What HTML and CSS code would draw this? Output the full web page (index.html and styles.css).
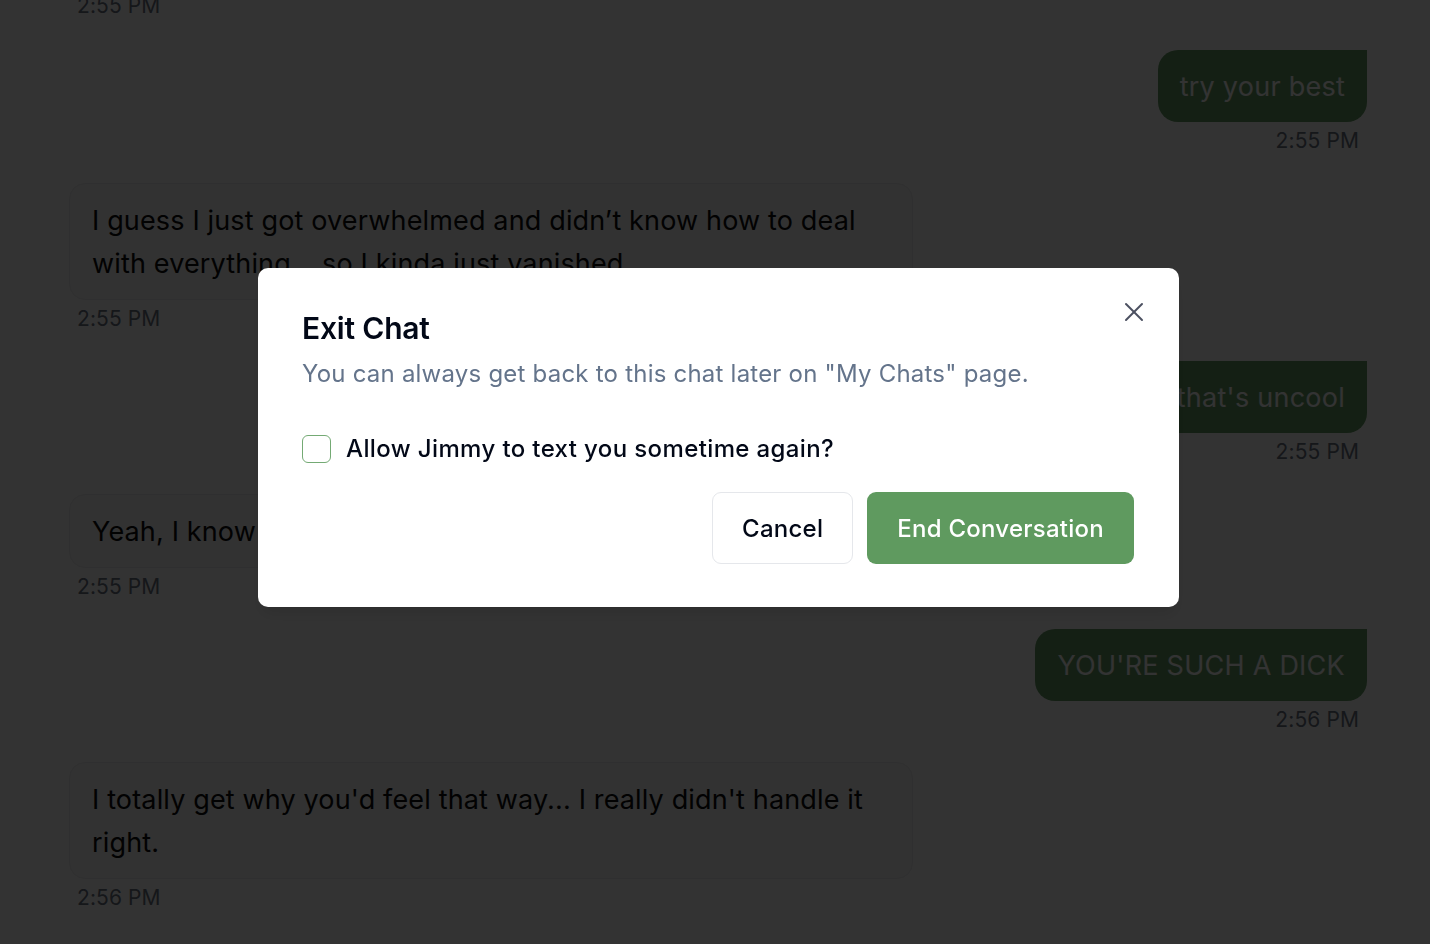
FILE: index.html
```html
<!DOCTYPE html>
<html lang="en">
<head>
<meta charset="utf-8">
<title>Chat</title>
<link rel="stylesheet" href="styles.css">
</head>
<body>
<main class="chat">
  <div class="ts ts-recv ts-first">2:55 PM</div>

  <div class="group sent">
    <div class="bubble bubble-sent">try your best</div>
    <div class="ts ts-sent">2:55 PM</div>
  </div>

  <div class="group recv">
    <div class="bubble bubble-recv">I guess I just got overwhelmed and didn’t know how to deal with everything… so I kinda just vanished.</div>
    <div class="ts ts-recv">2:55 PM</div>
  </div>

  <div class="group sent">
    <div class="bubble bubble-sent">bro ghosting me for weeks, that's uncool</div>
    <div class="ts ts-sent">2:55 PM</div>
  </div>

  <div class="group recv">
    <div class="bubble bubble-recv">Yeah, I know that wasn't fair to you at all.</div>
    <div class="ts ts-recv">2:55 PM</div>
  </div>

  <div class="group sent">
    <div class="bubble bubble-sent">YOU'RE SUCH A DICK</div>
    <div class="ts ts-sent">2:56 PM</div>
  </div>

  <div class="group recv">
    <div class="bubble bubble-recv">I totally get why you'd feel that way... I really didn't handle it right.</div>
    <div class="ts ts-recv">2:56 PM</div>
  </div>
</main>

<div class="overlay"></div>

<div class="dialog" role="dialog" aria-labelledby="dlg-title">
  <button class="close" aria-label="Close">
    <svg width="20" height="20" viewBox="0 0 20 20" fill="none" stroke="currentColor" stroke-width="2" stroke-linecap="round">
      <line x1="2" y1="2" x2="18" y2="18"/>
      <line x1="18" y1="2" x2="2" y2="18"/>
    </svg>
  </button>
  <h2 class="title" id="dlg-title">Exit Chat</h2>
  <p class="desc">You can always get back to this chat later on "My Chats" page.</p>
  <label class="check-row">
    <span class="checkbox"></span>
    <span class="check-label">Allow Jimmy to text you sometime again?</span>
  </label>
  <div class="actions">
    <button class="btn btn-outline">Cancel</button>
    <button class="btn btn-primary">End Conversation</button>
  </div>
</div>
</body>
</html>
```
FILE: styles.css
```css
* { box-sizing: border-box; }

html, body {
  margin: 0;
  padding: 0;
  height: 100%;
  overflow: hidden;
}

body {
  background: #ffffff;
  font-family: Inter, "Noto Sans", "Liberation Sans", sans-serif;
  color: #0a0a0a;
}

.chat {
  display: flex;
  flex-direction: column;
  padding: 0 63px 0 69px;
}

.ts {
  font-size: 21px;
  line-height: 30px;
  color: #6b7280;
  margin-top: 4px;
  letter-spacing: 0.1px;
}

.ts-first {
  margin-top: -8.6px;
  margin-bottom: 28.5px;
}

.ts-recv { padding-left: 8px; }
.ts-sent { text-align: right; padding-right: 8px; }

.group {
  display: flex;
  flex-direction: column;
  margin-bottom: 27px;
}

.group.sent { align-items: flex-end; }
.group.recv { align-items: flex-start; }

.bubble {
  font-size: 27px;
  line-height: 43px;
  max-width: 65%;
  letter-spacing: 0.15px;
}

.bubble-sent {
  background: #649b64;
  color: #ffffff;
  padding: 15px 22px 14px;
  border-radius: 20px 0 20px 20px;
  white-space: nowrap;
  letter-spacing: 0.25px;
}

.bubble-recv {
  width: 65%;
  background: #f7f7f8;
  border: 1px solid #ececee;
  color: #0a0a0a;
  padding: 15px 22px 14px;
  border-radius: 16px;
}

.overlay {
  position: fixed;
  inset: 0;
  background: rgba(0, 0, 0, 0.8);
}

.dialog {
  position: fixed;
  left: 258px;
  top: 268px;
  width: 921px;
  background: #ffffff;
  border-radius: 10px;
  padding: 42px 45px 43px 44px;
  box-shadow: 0 10px 15px -3px rgba(0,0,0,0.1), 0 4px 6px -4px rgba(0,0,0,0.1);
}

.close {
  position: absolute;
  top: 34px;
  right: 35px;
  width: 20px;
  height: 20px;
  padding: 0;
  border: 0;
  background: transparent;
  color: #4b5060;
  display: flex;
}

.title {
  margin: 0;
  font-size: 30px;
  line-height: 36px;
  font-weight: 600;
  letter-spacing: -0.2px;
  color: #020817;
}

.desc {
  margin: 10px 0 0;
  font-size: 24px;
  line-height: 36px;
  color: #64748b;
  letter-spacing: 0.22px;
}

.check-row {
  display: flex;
  align-items: center;
  gap: 15px;
  margin-top: 38px;
}

.checkbox {
  width: 29px;
  height: 28px;
  border: 1.5px solid #74aa74;
  border-radius: 6px;
  flex: none;
}

.check-label {
  font-size: 24px;
  line-height: 36px;
  font-weight: 500;
  color: #020817;
  letter-spacing: 0.38px;
  margin-top: 1px;
}

.actions {
  display: flex;
  justify-content: flex-end;
  gap: 14px;
  margin-top: 25px;
}

.btn {
  height: 72px;
  padding: 0 29px;
  font-family: inherit;
  font-size: 24px;
  font-weight: 500;
  letter-spacing: 0.25px;
  border-radius: 9px;
  border: 1px solid transparent;
}

.btn-outline {
  background: #ffffff;
  border-color: #e5e7eb;
  color: #020817;
}

.btn-primary {
  background: #5f9a5f;
  color: #ffffff;
}
```
